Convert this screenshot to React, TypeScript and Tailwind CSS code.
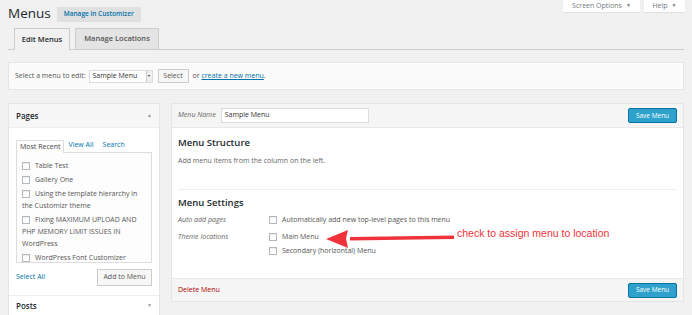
import React from "react";

const Check = () => (
  <span className="inline-block w-[8px] h-[8px] border border-[#b4b9be] bg-white shadow-[inset_0_1px_1px_rgba(0,0,0,0.08)] shrink-0" />
);

const Item = ({ lines }: { lines: string[] }) => (
  <div className="py-[1px]">
    <div className="h-[12px] flex items-center gap-[5px]">
      <Check />
      {lines[0]}
    </div>
    {lines.slice(1).map((l) => (
      <div key={l} className="h-[12px] flex items-center">
        {l}
      </div>
    ))}
  </div>
);

export default function App() {
  return (
    <div
      className="relative w-[692px] h-[315px] overflow-hidden bg-[#f1f1f1] text-[#444]"
      style={{ fontFamily: '"Open Sans", "Noto Sans", sans-serif' }}
    >
      {/* screen options / help */}
      <div className="absolute top-0 right-[7px] flex gap-[4px]">
        <div className="h-[12px] w-[77px] bg-white shadow-[0_1px_1px_rgba(0,0,0,0.06)] flex items-center justify-center gap-[4px] text-[7px] text-[#72777c]">
          Screen Options <span className="text-[5px]">▼</span>
        </div>
        <div className="h-[12px] w-[41px] bg-white shadow-[0_1px_1px_rgba(0,0,0,0.06)] flex items-center justify-center gap-[4px] text-[7px] text-[#72777c]">
          Help <span className="text-[5px]">▼</span>
        </div>
      </div>

      {/* title */}
      <div className="flex items-center pl-[8px] pt-[5px] h-[23px]">
        <span className="text-[13.5px] leading-none text-[#23282d]">Menus</span>
        <span className="ml-[6px] h-[15px] w-[84px] bg-[#e0e0e0] text-[6.5px] font-semibold text-[#0073aa] flex items-center justify-center">
          Manage in Customizer
        </span>
      </div>

      {/* tabs */}
      <div className="mx-[8px] mt-[5px] border-b border-[#ccc] h-[22px] flex items-end pl-[6px] gap-[5px]">
        <div className="h-[22px] w-[56px] border border-[#ccc] border-b-0 bg-[#f1f1f1] -mb-px flex items-center justify-center text-[7.5px] font-semibold text-[#23282d]">
          Edit Menus
        </div>
        <div className="h-[21px] w-[84px] border border-[#ccc] border-b-0 bg-[#e4e4e4] flex items-center justify-center text-[7.5px] font-semibold text-[#555]">
          Manage Locations
        </div>
      </div>

      {/* select bar */}
      <div className="mx-[8px] mt-[12px] h-[28px] bg-[#fbfbfb] border border-[#e5e5e5] flex items-center px-[6px] text-[7px] text-[#555]">
        <span>Select a menu to edit:</span>
        <div className="ml-[3px] h-[13px] w-[64px] border border-[#ddd] bg-white flex items-center justify-between pl-[3px] text-[7px] text-[#333]">
          Sample Menu
          <span className="h-[11px] w-[6px] border-l border-[#ccc] bg-[#eee] text-[4px] flex items-center justify-center">▾</span>
        </div>
        <div className="ml-[5px] h-[14px] w-[31px] border border-[#ccc] bg-[#f7f7f7] flex items-center justify-center text-[7px] text-[#555]">
          Select
        </div>
        <span className="ml-[4px] text-[7px]">
          or <span className="text-[#0073aa] underline">create a new menu</span>.
        </span>
      </div>

      {/* main */}
      <div className="mx-[8px] mt-[13px] flex">
        {/* left column */}
        <div className="w-[152px] shrink-0">
          <div className="border border-[#e5e5e5] bg-white">
            <div className="h-[24px] bg-[#f7f7f7] border-b border-[#eee] flex items-center justify-between px-[7px] text-[8px] font-semibold text-[#23282d]">
              Pages <span className="text-[5px] text-[#999]">▲</span>
            </div>
            <div className="px-[7px] pt-[11px] pb-[9px]">
              <div className="flex items-end text-[7px] h-[13px]">
                <div className="h-[13px] px-[3px] border border-[#ddd] border-b-0 bg-white -mb-px flex items-center text-[#444] relative z-10">
                  Most Recent
                </div>
                <span className="ml-[4px] mb-[2px] text-[#0073aa]">View All</span>
                <span className="ml-[9px] mb-[2px] text-[#0073aa]">Search</span>
              </div>
              <div className="border border-[#ddd] bg-[#fdfdfd] h-[111px] overflow-hidden px-[5px] pt-[6px] text-[7px] text-[#555]">
                <Item lines={["Table Test"]} />
                <Item lines={["Gallery One"]} />
                <Item lines={["Using the template hierarchy in", "the Customizr theme"]} />
                <Item lines={["Fixing MAXIMUM UPLOAD AND", "PHP MEMORY LIMIT ISSUES IN", "WordPress"]} />
                <Item lines={["WordPress Font Customizer"]} />
              </div>
              <div className="mt-[6px] flex items-center justify-between">
                <span className="text-[7px] text-[#0073aa]">Select All</span>
                <div className="h-[17px] w-[55px] border border-[#ccc] bg-[#f7f7f7] flex items-center justify-center text-[7px] text-[#555]">
                  Add to Menu
                </div>
              </div>
            </div>
            <div className="h-[20px] border-t border-[#eee] flex items-center justify-between px-[7px] text-[8px] font-semibold text-[#23282d]">
              Posts <span className="text-[5px] text-[#999]">▼</span>
            </div>
          </div>
        </div>

        {/* right column */}
        <div className="ml-[11px] flex-1 border border-[#e5e5e5] bg-white h-[199px] flex flex-col">
          <div className="h-[24px] bg-[#f5f5f5] border-b border-[#e8e8e8] flex items-center px-[6px]">
            <span className="text-[7px] italic text-[#666]">Menu Name</span>
            <div className="ml-[5px] h-[15px] w-[148px] border border-[#ddd] bg-white flex items-center px-[3px] text-[7px] text-[#333]">
              Sample Menu
            </div>
            <div className="ml-auto h-[15px] w-[49px] bg-[#2ea2cc] border border-[#0074a2] rounded-[2px] flex items-center justify-center text-[6.5px] text-white">
              Save Menu
            </div>
          </div>
          <div className="flex-1 px-[6px]">
            <div className="pt-[8px] text-[9.5px] font-semibold text-[#23282d]">Menu Structure</div>
            <div className="mt-[6px] text-[7px] text-[#666]">Add menu items from the column on the left.</div>
            <div className="mt-[22px] border-t border-[#eee]" />
            <div className="pt-[6px] text-[9.5px] font-semibold text-[#23282d]">Menu Settings</div>
            <div className="mt-[5px] flex text-[7px]">
              <span className="w-[91px] italic text-[#666]">Auto add pages</span>
              <span className="flex items-center gap-[5px] text-[#555]"><Check />Automatically add new top-level pages to this menu</span>
            </div>
            <div className="mt-[6px] flex text-[7px]">
              <span className="w-[91px] italic text-[#666]">Theme locations</span>
              <div className="flex flex-col gap-[4px] text-[#555]">
                <span className="flex items-center gap-[5px]"><Check />Main Menu</span>
                <span className="flex items-center gap-[5px]"><Check />Secondary (horizontal) Menu</span>
              </div>
            </div>
          </div>
          <div className="h-[23px] bg-[#f5f5f5] border-t border-[#e8e8e8] flex items-center px-[6px]">
            <span className="text-[7px] text-[#a00]">Delete Menu</span>
            <div className="ml-auto h-[15px] w-[49px] bg-[#2ea2cc] border border-[#0074a2] rounded-[2px] flex items-center justify-center text-[6.5px] text-white">
              Save Menu
            </div>
          </div>
        </div>
      </div>

      {/* annotation arrow */}
      <svg className="absolute left-[320px] top-[226px]" width="140" height="24" viewBox="0 0 140 24">
        <path d="M 30 11 L 134 9.5 L 134 13 L 30 14.5 Z" fill="#f0333a" />
        <path d="M 6 13 L 28 4 L 26 12.5 L 28 22 Z" fill="#f0333a" />
      </svg>
      <div
        className="absolute left-[457px] top-[226px] text-[10.5px] text-[#f0333a]"
        style={{ fontFamily: '"Liberation Sans", Arial, sans-serif' }}
      >
        check to assign menu to location
      </div>
    </div>
  );
}
